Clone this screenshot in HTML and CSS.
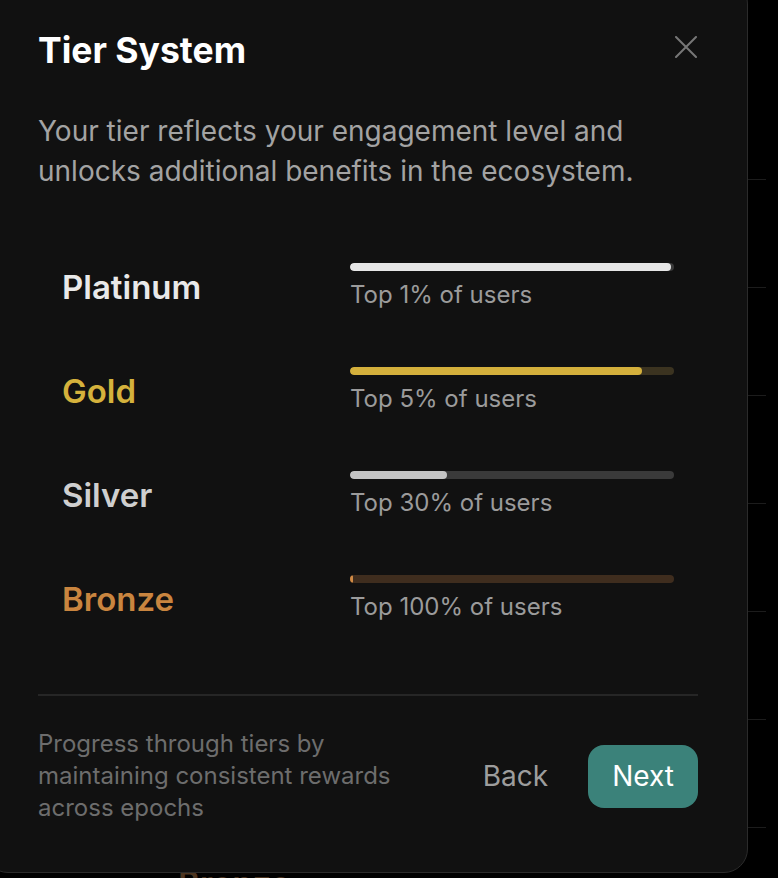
FILE: index.html
```html
<!DOCTYPE html>
<html lang="en">
<head>
  <meta charset="UTF-8">
  <meta name="viewport" content="width=device-width, initial-scale=1.0">
  <title>Tier System</title>
  <link rel="stylesheet" href="styles.css">
</head>
<body>
  <div class="bg-table">
    <div class="bg-row"></div>
    <div class="bg-row"></div>
    <div class="bg-row"></div>
    <div class="bg-row"></div>
    <div class="bg-row"></div>
    <div class="bg-row"></div>
    <div class="bg-row"></div>
    <div class="bg-row bg-last"><span class="bg-tier">Bronze</span></div>
  </div>

  <div class="modal">
    <div class="modal-header">
      <h2 class="modal-title">Tier System</h2>
      <button class="close-btn" aria-label="Close">
        <svg width="22" height="22" viewBox="0 0 22 22" fill="none" stroke="currentColor" stroke-width="2" stroke-linecap="round">
          <path d="M1 1L21 21M21 1L1 21"/>
        </svg>
      </button>
    </div>
    <p class="modal-desc">Your tier reflects your engagement level and unlocks additional benefits in the ecosystem.</p>

    <div class="tier-list">
      <div class="tier-row">
        <div class="tier-name platinum">Platinum</div>
        <div class="tier-info">
          <div class="bar track-grey"><div class="fill fill-platinum" style="width: 99%"></div></div>
          <div class="tier-label">Top 1% of users</div>
        </div>
      </div>
      <div class="tier-row">
        <div class="tier-name gold">Gold</div>
        <div class="tier-info">
          <div class="bar track-gold"><div class="fill fill-gold" style="width: 90%"></div></div>
          <div class="tier-label">Top 5% of users</div>
        </div>
      </div>
      <div class="tier-row">
        <div class="tier-name silver">Silver</div>
        <div class="tier-info">
          <div class="bar track-grey"><div class="fill fill-silver" style="width: 30%"></div></div>
          <div class="tier-label">Top 30% of users</div>
        </div>
      </div>
      <div class="tier-row">
        <div class="tier-name bronze">Bronze</div>
        <div class="tier-info">
          <div class="bar track-bronze"><div class="fill fill-bronze" style="width: 1%"></div></div>
          <div class="tier-label">Top 100% of users</div>
        </div>
      </div>
    </div>

    <div class="modal-footer">
      <p class="footer-note">Progress through tiers by maintaining consistent rewards across epochs</p>
      <div class="footer-btns">
        <button class="btn back-btn">Back</button>
        <button class="btn next-btn">Next</button>
      </div>
    </div>
  </div>
</body>
</html>
```

FILE: styles.css
```css
* {
  box-sizing: border-box;
}
html, body {
  margin: 0;
  height: 100%;
}
body {
  background: #000;
  font-family: Inter, 'Noto Sans', sans-serif;
  overflow: hidden;
  position: relative;
}
.bg-table {
  padding-top: 72px;
  margin-right: 12px;
}
.bg-row {
  height: 108px;
  border-bottom: 1px solid #1c1c1c;
}
.bg-last {
  height: 50px;
  border-bottom: none;
  padding: 35px 0 0 178px;
  overflow: hidden;
}
.bg-tier {
  color: #4d3520;
  font-size: 33px;
  font-weight: 600;
  line-height: 40px;
}
.modal {
  position: absolute;
  top: -20px;
  left: -16px;
  width: 764px;
  height: 893px;
  background: #111;
  border: 1px solid #2b2b2b;
  border-radius: 24px;
  padding: 50px 49px 0 53px;
}
.modal-header {
  display: flex;
  justify-content: space-between;
  align-items: flex-start;
}
.modal-title {
  margin: 0;
  color: #fff;
  font-size: 35.5px;
  font-weight: 700;
  line-height: 40px;
}
.close-btn {
  margin: 5px 1px 0 0;
  padding: 0;
  border: none;
  background: none;
  color: #777;
  width: 22px;
  height: 22px;
  display: flex;
  cursor: pointer;
}
.modal-desc {
  margin: 40px 0 0;
  max-width: 640px;
  color: #a3a3a3;
  font-size: 28px;
  line-height: 40px;
}
.tier-list {
  display: flex;
  flex-direction: column;
  gap: 57px;
  padding: 0 24px;
  margin: 72px 0 72px;
}
.tier-row {
  display: grid;
  grid-template-columns: 288px 1fr;
  align-items: center;
}
.tier-name {
  font-size: 33px;
  font-weight: 600;
  line-height: 40px;
}
.platinum { color: #e9e9e9; }
.gold { color: #d5b23c; }
.silver { color: #cfcfcf; }
.bronze { color: #c9853f; }
.bar {
  height: 8px;
  border-radius: 4px;
  overflow: hidden;
}
.fill {
  height: 100%;
  border-radius: 4px;
}
.track-grey { background: #3a3a3a; }
.track-gold { background: #3b3320; }
.track-bronze { background: #3f2d1e; }
.fill-platinum { background: #e6e6e6; }
.fill-gold { background: #d4b03c; }
.fill-silver { background: #c4c4c4; }
.fill-bronze { background: #d08a45; min-width: 3px; border-radius: 2px; }
.tier-label {
  color: #9b9b9b;
  font-size: 24px;
  line-height: 30px;
  margin-top: 9px;
}
.modal-footer {
  border-top: 2px solid #262626;
  padding-top: 32px;
  display: flex;
  justify-content: space-between;
  align-items: center;
}
.footer-note {
  margin: 0;
  max-width: 372px;
  color: #6d6d6d;
  font-size: 24px;
  line-height: 32px;
}
.footer-btns {
  display: flex;
  gap: 16px;
  align-items: center;
}
.btn {
  font-family: Inter, 'Noto Sans', sans-serif;
  font-size: 28px;
  border: none;
  border-radius: 16px;
  height: 63px;
  padding: 0 24px;
  cursor: pointer;
}
.back-btn {
  background: none;
  color: #9d9d9d;
}
.next-btn {
  background: #3b827a;
  color: #fff;
}
```
